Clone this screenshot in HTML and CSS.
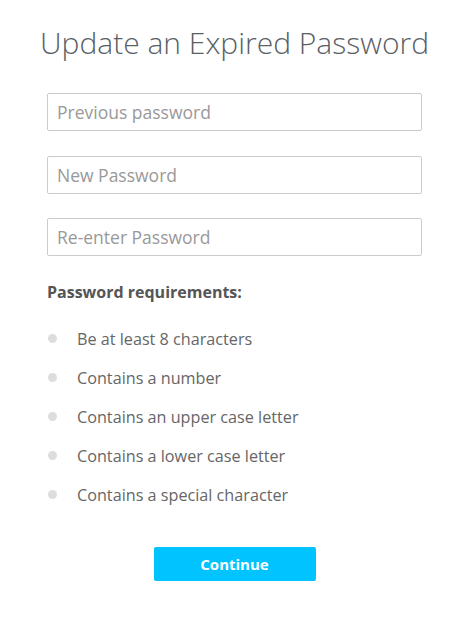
FILE: index.html
```html
<!DOCTYPE html>
<html>
<head>
<meta charset="utf-8">
<link rel="stylesheet" href="styles.css">
</head>
<body>
<div class="page">
  <h1 class="title">Update an Expired Password</h1>
  <form class="form">
    <input class="field" type="password" placeholder="Previous password">
    <input class="field" type="password" placeholder="New Password">
    <input class="field" type="password" placeholder="Re-enter Password">
  </form>
  <div class="reqs">
    <div class="reqs-title">Password requirements:</div>
    <ul class="reqs-list">
      <li class="req">Be at least 8 characters</li>
      <li class="req">Contains a number</li>
      <li class="req">Contains an upper case letter</li>
      <li class="req">Contains a lower case letter</li>
      <li class="req">Contains a special character</li>
    </ul>
  </div>
  <div class="actions">
    <button class="btn" type="button">Continue</button>
  </div>
</div>
</body>
</html>
```
FILE: styles.css
```css
* { box-sizing: border-box; }
html, body { margin: 0; padding: 0; background: #fff; }
body {
  font-family: "Open Sans", "Liberation Sans", sans-serif;
  color: #555;
  padding-left: 4px;
}
.page {
  width: 375px;
  margin: 0 auto;
  padding-top: 20px;
  display: flex;
  flex-direction: column;
}
.title {
  margin: 0 -30px;
  font-weight: 300;
  font-size: 30px;
  line-height: 46px;
  text-align: center;
  color: #5a5f66;
}
.form {
  margin-top: 27px;
  display: flex;
  flex-direction: column;
  gap: 24.5px;
}
.field {
  display: block;
  width: 100%;
  height: 38px;
  border: 1px solid #ccc;
  border-radius: 2px;
  padding: 0 9px;
  font-family: "Open Sans", "Liberation Sans", sans-serif;
  font-size: 17.5px;
  color: #555;
  outline: none;
}
.field::placeholder { color: #999; }
.reqs { margin-top: 25px; }
.reqs-title {
  font-weight: 700;
  font-size: 16px;
  line-height: 22px;
  color: #555;
}
.reqs-list {
  list-style: none;
  margin: 16px 0 0;
  padding: 0;
  display: flex;
  flex-direction: column;
}
.req {
  display: flex;
  align-items: center;
  height: 39px;
  font-size: 16.2px;
  color: #666;
}
.req::before {
  content: "";
  width: 9px;
  height: 9px;
  border-radius: 50%;
  background: #ddd;
  margin-left: 1px;
  margin-right: 20px;
}
.actions {
  margin-top: 33px;
  display: flex;
  justify-content: center;
}
.btn {
  width: 162px;
  height: 34px;
  border: none;
  border-radius: 2px;
  background: #00c3ff;
  color: #fff;
  font-family: "Open Sans", "Liberation Sans", sans-serif;
  font-weight: 700;
  font-size: 15px;
  cursor: pointer;
}
```
